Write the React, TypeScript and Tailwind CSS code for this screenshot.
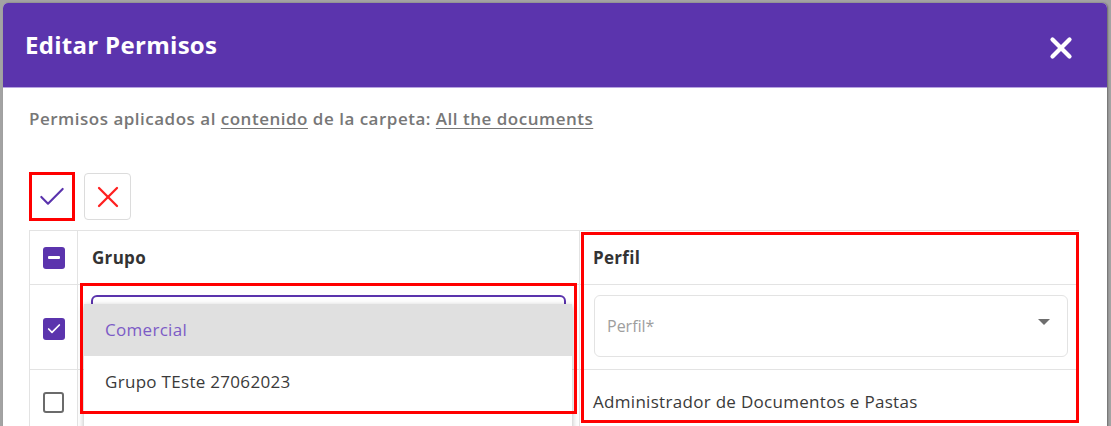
import { X, Check } from 'lucide-react'

const font = { fontFamily: '"Open Sans", Lato, sans-serif' }

const Checkbox = ({ state }: { state: 'on' | 'off' | 'mixed' }) => {
  if (state === 'off') {
    return <div className="h-[21px] w-[21px] rounded-[3px] border-2 border-[#6b6b6b] bg-white" />
  }
  return (
    <div className="flex h-[22px] w-[22px] items-center justify-center rounded-[3px] bg-[#5b34ad]">
      {state === 'mixed' ? (
        <div className="h-[3px] w-[12px] rounded-[1px] bg-white" />
      ) : (
        <Check size={16} strokeWidth={2.6} className="text-white" />
      )}
    </div>
  )
}

export default function App() {
  return (
    <div
      className="h-[426px] w-[1111px] overflow-hidden bg-[#a3a3a3] pl-[3px] pt-[3px]"
      style={font}
    >
      <div className="h-[440px] w-[1104px] overflow-hidden rounded-t-[5px] bg-white shadow-[1px_0_2px_rgba(0,0,0,0.35)]">
        {/* header */}
        <div className="flex h-[85px] items-center justify-between border-b border-[#b7a4e0] bg-[#5b34ad] pl-[22px] pr-[29px]">
          <h1 className="text-[24px] font-bold leading-none tracking-[0.3px] text-white">Editar Permisos</h1>
          <X size={34} strokeWidth={3} className="mt-[6px] text-white" />
        </div>

        <div className="px-[26px] pt-[19px]">
          <p className="text-[17px] font-semibold leading-[24px] tracking-[0.5px] text-[#777777]">
            Permisos aplicados al <span className="underline underline-offset-[3px]">contenido</span> de la carpeta:{' '}
            <span className="underline underline-offset-[3px]">All the documents</span>
          </p>

          {/* actions */}
          <div className="mt-[41px] flex items-start gap-[9px]">
            <button className="flex h-[49px] w-[46px] items-center justify-center border-[3px] border-[#ff0000] bg-white">
              <Check size={32} strokeWidth={1.6} className="text-[#5b34ad]" />
            </button>
            <button className="mt-px flex h-[47px] w-[47px] items-center justify-center rounded-[4px] border border-[#dcdcdc] bg-white">
              <X size={36} strokeWidth={1.5} className="text-[#ff1f1f]" />
            </button>
          </div>

          {/* table */}
          <div className="relative mt-[9px] w-[1050px] border-t border-[#e3e3e3] text-[17px] tracking-[0.3px]">
            <div className="grid grid-cols-[49px_502px_1fr]">
              {/* header row */}
              <div className="flex h-[54px] items-center justify-center border-x border-b border-[#e3e3e3]">
                <Checkbox state="mixed" />
              </div>
              <div className="flex h-[54px] items-center border-b border-r border-[#e3e3e3] pl-[14px] font-bold text-[#333333]">
                Grupo
              </div>
              <div className="flex h-[54px] items-center border-b border-[#e3e3e3] pl-[13px] font-bold text-[#333333]">
                Perfil
              </div>

              {/* row 2 */}
              <div className="flex h-[85px] items-center justify-center border-x border-b border-[#e3e3e3] pt-[3px]">
                <Checkbox state="on" />
              </div>
              <div className="relative h-[85px] border-b border-r border-[#e3e3e3] px-[13px] pt-[10px]">
                <div className="h-[62px] rounded-[6px] border-2 border-[#5b34ad]" />
                <div className="absolute left-[6px] top-[19px] z-10 h-[140px] w-[488px] bg-white shadow-[0_2px_6px_rgba(0,0,0,0.3)]">
                  <div className="flex h-[52px] items-center bg-[#e0e0e0] pl-[21px] text-[#7c5bc6]">
                    Comercial
                  </div>
                  <div className="flex h-[52px] items-center pl-[21px] text-[#3a3a3a]">
                    Grupo TEste 27062023
                  </div>
                </div>
              </div>
              <div className="h-[85px] border-b border-[#e3e3e3] pl-[14px] pr-[11px] pt-[10px]">
                <div className="flex h-[62px] items-center justify-between rounded-[6px] border border-[#e3e3e3] pl-[12px] pr-[17px]">
                  <span className="text-[16px] tracking-normal text-[#9e9e9e]">Perfil*</span>
                  <svg width="12" height="6" viewBox="0 0 12 6" className="-mt-[8px]">
                    <path d="M0 0h12L6 6z" fill="#6e6e6e" />
                  </svg>
                </div>
              </div>

              {/* row 3 */}
              <div className="flex h-[64px] items-center justify-center border-x border-[#e3e3e3]">
                <Checkbox state="off" />
              </div>
              <div className="h-[64px] border-r border-[#e3e3e3]" />
              <div className="flex h-[64px] items-center pl-[13px] text-[#3a3a3a]">
                Administrador de Documentos e Pastas
              </div>
            </div>

            {/* annotation boxes */}
            <div className="pointer-events-none absolute left-[51px] top-[52px] z-20 h-[131px] w-[497px] border-[3px] border-[#ff0000]" />
            <div className="pointer-events-none absolute left-[552px] top-[1px] z-20 h-[191px] w-[498px] border-[3px] border-[#ff0000]" />
          </div>
        </div>
      </div>
    </div>
  )
}
